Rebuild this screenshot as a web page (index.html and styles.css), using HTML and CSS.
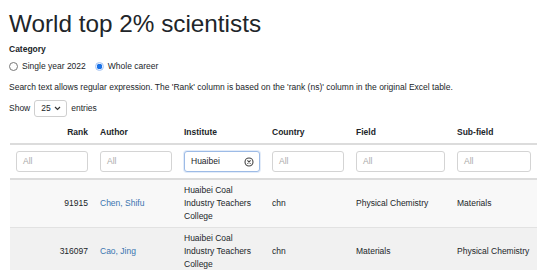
FILE: index.html
```html
<html lang="en">
<head>
  <meta charset="UTF-8">
  <meta name="viewport" content="width=device-width, initial-scale=1.0">
  <title>World top 2% scientists</title>
  <link rel="stylesheet" href="styles.css">
</head>
<body>
  <div class="page">
    <h1>World top 2% scientists</h1>

    <div class="label">Category</div>
    <div class="radios">
      <span class="radio"></span><span class="radio-text">Single year 2022</span>
      <span class="radio checked"></span><span class="radio-text">Whole career</span>
    </div>

    <p class="note">Search text allows regular expression. The 'Rank' column is based on the 'rank (ns)' column in the original Excel table.</p>

    <div class="length">
      Show
      <span class="select">25
        <svg width="7" height="5" viewBox="0 0 7 5"><path d="M1 1 L3.5 3.5 L6 1" fill="none" stroke="#333" stroke-width="1.2"/></svg>
      </span>
      entries
    </div>

    <table class="results">
      <colgroup>
        <col style="width:84px">
        <col style="width:84px">
        <col style="width:88px">
        <col style="width:84px">
        <col style="width:101px">
        <col style="width:86px">
      </colgroup>
      <thead>
        <tr class="heads">
          <th class="num">Rank</th>
          <th>Author</th>
          <th>Institute</th>
          <th>Country</th>
          <th>Field</th>
          <th>Sub-field</th>
        </tr>
        <tr class="filters">
          <td><div class="filter"><span class="ph">All</span></div></td>
          <td><div class="filter"><span class="ph">All</span></div></td>
          <td>
            <div class="filter focus">
              <span>Huaibei</span>
              <svg class="clear" width="10" height="10" viewBox="0 0 10 10"><circle cx="5" cy="5" r="4" fill="none" stroke="#444" stroke-width="1.1"/><path d="M3.4 3.4 L6.6 6.6 M6.6 3.4 L3.4 6.6" stroke="#444" stroke-width="1.1"/></svg>
            </div>
          </td>
          <td><div class="filter"><span class="ph">All</span></div></td>
          <td><div class="filter"><span class="ph">All</span></div></td>
          <td><div class="filter"><span class="ph">All</span></div></td>
        </tr>
      </thead>
      <tbody>
        <tr class="odd">
          <td class="num">91915</td>
          <td><a href="#">Chen, Shifu</a></td>
          <td>Huaibei Coal Industry Teachers College</td>
          <td>chn</td>
          <td>Physical Chemistry</td>
          <td>Materials</td>
        </tr>
        <tr class="even">
          <td class="num">316097</td>
          <td><a href="#">Cao, Jing</a></td>
          <td>Huaibei Coal Industry Teachers College</td>
          <td>chn</td>
          <td>Materials</td>
          <td class="shift">Physical Chemistry</td>
        </tr>
      </tbody>
    </table>
  </div>
</body>
</html>
```

FILE: styles.css
```css
body{
  margin: 0;
  background: white;
  color: #212529;
  font-family: 'Liberation Sans', Arial, sans-serif;
  font-size: 8.5px;
  line-height: 13px;
  overflow: hidden;
}
.page{
  padding: 9px 6px 0 9px;
}
h1{
  margin: 0 0 5px;
  font-size: 24.3px;
  line-height: 29px;
  font-weight: normal;
}
.label{
  font-weight: bold;
}
.radios{
  display: flex;
  align-items: center;
  margin-top: 4px;
}
.radio{
  width: 7px;
  height: 7px;
  border: 1px solid #777;
  border-radius: 50%;
  margin-right: 4px;
}
.radio.checked{
  border-color: #a9c6f3;
  background: radial-gradient(circle, #1a73e8 0 2.6px, #e8f0fd 3px);
}
.radio-text{
  margin-right: 9px;
}
.note{
  margin: 8px 0 0;
}
.length{
  display: flex;
  align-items: center;
  margin-top: 6px;
  height: 17px;
}
.select{
  display: flex;
  align-items: center;
  justify-content: space-between;
  width: 20px;
  height: 15px;
  padding: 0 5px 0 6px;
  margin: 0 4px 0 4px;
  border: 1px solid #cfcfcf;
  border-radius: 3px;
}
.results{
  margin: 5px 0 0 1px;
  width: 527px;
  table-layout: fixed;
  border-collapse: collapse;
  font-size: inherit;
  line-height: inherit;
  color: inherit;
}
.results th, .results td{
  padding: 4px 6px;
  text-align: left;
  vertical-align: middle;
}
.results .num{
  text-align: right;
}
.heads th{
  font-weight: bold;
  border-bottom: 2px solid #dcdcdc;
}
.filters td{
  padding: 6px 6px;
  border-bottom: 2px solid #dcdcdc;
}
.filter{
  display: flex;
  align-items: center;
  justify-content: space-between;
  height: 19px;
  padding: 0 5px 0 6px;
  border: 1px solid #d4d4d4;
  border-radius: 3px;
  background: white;
}
.filter .ph{
  color: #aaa;
}
.filter.focus{
  border-color: #9dbbe6;
  box-shadow: 0 0 0 1px #e3ecf9;
}
tbody td{
  border-bottom: 1px solid #e2e2e2;
}
tbody tr.odd{
  background: #f8f8f8;
}
tbody tr.even{
  background: #f1f1f1;
}
tbody a{
  color: #3a75b0;
  text-decoration: none;
}
.shift{
  padding-left: 8px;
}
```
